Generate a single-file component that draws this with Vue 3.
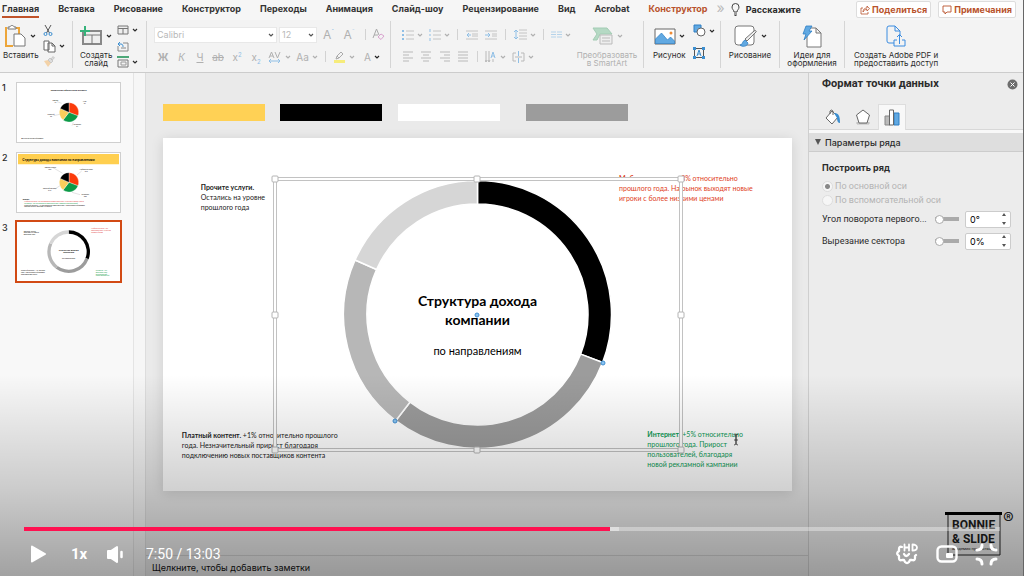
<script setup>
import { h, ref } from 'vue'

const tabs = ['Главная', 'Вставка', 'Рисование', 'Конструктор', 'Переходы', 'Анимация', 'Слайд-шоу', 'Рецензирование', 'Вид', 'Acrobat']

const Chev = () => h('svg', { class: 'chev', viewBox: '0 0 6 6', width: 6, height: 6 }, [
  h('path', { d: 'M1 2l2 2 2-2', fill: 'none', stroke: 'currentColor', 'stroke-width': 1.2 })
])

const slice = (cx, cy, R, r, from, to) => {
  const p = (a, d) => {
    const t = (a * Math.PI) / 180
    return `${(cx + d * Math.sin(t)).toFixed(2)} ${(cy - d * Math.cos(t)).toFixed(2)}`
  }
  return `M${p(from, R)}A${R} ${R} 0 0 1 ${p(to, R)}L${p(to, r)}A${r} ${r} 0 0 0 ${p(from, r)}Z`
}

const angles = [0, 111, 217.6, 294, 360]
const ringColors = ['#000', '#9c9c9c', '#b7b7b7', '#d6d6d6']
const pieColors = ['#fb3c0c', '#0c9a47', '#f9cd5c', '#000']
const build = (cx, cy, R, r, colors) =>
  colors.map((fill, i) => ({ fill, d: slice(cx, cy, R, r, angles[i], angles[i + 1]) }))

const ring = build(314.5, 176.5, 134, 110.5, ringColors)
const miniRing = build(155, 89, 64, 54, ringColors)
const miniPie = build(156, 88, 29, 1, pieColors)

const handles = [[112, 41], [314, 41], [518, 41], [112, 177], [518, 177], [112, 312], [314, 312], [518, 312]]
const points = [[314, 177], [440, 225], [232, 283]]

const axis = ref('main')
const angle = ref('0°')
const cut = ref('0%')
</script>

<template>
  <div class="app">
    <header class="tabs">
      <nav class="tablist">
        <a v-for="(t, i) in tabs" :key="t" href="#" :class="{ active: i === 0 }">{{ t }}</a>
        <a href="#" class="context">Конструктор</a>
      </nav>
      <span class="more">»</span>
      <button class="tell">
        <svg width="9" height="13" viewBox="0 0 9 13" fill="none" stroke="#444"><path d="M3 9C3 7 1 6.500 1 4a3.500 3.500 0 0 1 7 0C8 6.500 6 7 6 9zM3 11h3M3.500 12.500h2" /></svg>
        Расскажите
      </button>
      <div class="actions">
        <button>
          <svg width="10" height="10" viewBox="0 0 10 10" fill="none" stroke="#b9532d"><path d="M3 3H1v6h7V7M3 7c0-3 2-4 4-4V1l2.500 2.700L7 6V4.500C5 4.500 4 5 3 7z" stroke-width=".8" /></svg>
          Поделиться
        </button>
        <button>
          <svg width="10" height="10" viewBox="0 0 10 10" fill="none" stroke="#b9532d"><path d="M1 1h8v6H5L3 9V7H1z" stroke-width=".9" /></svg>
          Примечания
        </button>
      </div>
    </header>

    <section class="ribbon">
      <div class="group paste">
        <div class="stack">
          <button class="row">
            <svg width="22" height="24" viewBox="3 0 22 24" fill="none"><path d="M5 4H4v18h7M13 4h4v6" stroke="#eda63a" stroke-width="2" /><path d="M6 5V3h2c0-2 4-2 4 0h2v2z" fill="#fff" stroke="#777" /><path d="M12 10h7l4 4v8H12z" fill="#fff" stroke="#777" /></svg>
            <Chev />
          </button>
          <span class="cap">Вставить</span>
        </div>
        <div class="minis">
          <button aria-label="Вырезать"><svg width="10" height="11" viewBox="0 0 10 11" fill="none"><path d="M2 0l4.500 8M8 0L3.500 8" stroke="#555" /><circle cx="2.500" cy="9" r="1.500" stroke="#3b8ed0" /><circle cx="7.500" cy="9" r="1.500" stroke="#3b8ed0" /></svg></button>
          <button class="row" aria-label="Копировать"><svg width="13" height="13" viewBox="0 0 13 13" fill="#fff" stroke="#666"><path d="M1 1h5v9H1zM5 3h4l3 3v6H5zM9 3v3h3" /></svg><Chev /></button>
          <button aria-label="Формат по образцу"><svg width="12" height="11" viewBox="0 0 12 11"><path d="M1 5l4-1 3 3-3 4z" fill="#f3d2a8" /><path d="M5 4l2-2 3 3-2 2zM8 3l2-2.500 1.500 1.500L9 4z" fill="#ddd" stroke="#bbb" stroke-width=".7" /></svg></button>
        </div>
      </div>

      <div class="group newslide">
        <div class="stack">
          <button class="row">
            <svg width="23" height="20" viewBox="0 0 23 20" fill="none"><path d="M3 5h18v13H3z" fill="#eee" stroke="#888" stroke-width="2" /><path d="M3 9h18M12 9v9" stroke="#777" /><path d="M5 0v10M0 5h10" stroke="#35b27a" stroke-width="2" /></svg>
            <Chev />
          </button>
          <span class="cap">Создать<br />слайд</span>
        </div>
        <div class="minis">
          <button class="row" aria-label="Макет"><svg width="12" height="10" viewBox="0 0 12 10" fill="#eee" stroke="#777"><path d="M1 1h10v8H1zM1 3.500h10M6 3.500V9" /></svg><Chev /></button>
          <button aria-label="Сбросить"><svg width="12" height="11" viewBox="0 0 12 11" fill="none"><path d="M1 5v5h10V2H6M4 7h5" stroke="#888" /><path d="M1 3h3c2 0 2 2 2 3M3 1L1 3l2 2" stroke="#3b8ed0" /></svg></button>
          <button class="row" aria-label="Раздел"><svg width="12" height="12" viewBox="0 0 12 12" fill="none"><path d="M0 1h12" stroke="#4da878" stroke-width="2" /><path d="M1 4h10v7H1z" stroke="#777" /><path d="M4 6h5v3H4z" stroke="#999" /></svg><Chev /></button>
        </div>
      </div>

      <div class="group font dim">
        <div class="line combos">
          <label class="combo"><select aria-label="Шрифт"><option>Calibri</option></select><Chev /></label>
          <label class="combo"><select aria-label="Размер"><option>12</option></select><Chev /></label>
          <button class="big">A<sup>ˆ</sup></button>
          <button class="big">A<sup>ˇ</sup></button>
          <i class="bar"></i>
          <button aria-label="Очистить формат"><svg width="13" height="13" viewBox="0 0 13 13" fill="none"><path d="M1 10L4.500 1 7 7M2 7h4" stroke="#aaa" /><path d="M6 9l3-3 3 2-3 3.500z" stroke="#d9a3cf" /></svg></button>
        </div>
        <div class="line marks">
          <button class="b">Ж</button><button class="it">К</button><button class="u">Ч</button><button class="s">ab</button>
          <button>x<sup>2</sup></button><button>x<sub>2</sub></button>
          <button class="row" aria-label="Интервал между знаками"><svg width="14" height="12" viewBox="0 0 14 12" fill="none"><path d="M1 7l2.500-6L6 7M2 5h3M7 1l2.500 6L12 1" stroke="#b0b0b0" /><path d="M1 10h11M3 8l-2 2 2 2M10 8l2 2-2 2" stroke="#8fbfe6" /></svg><Chev /></button><button class="row">Aa<Chev /></button>
          <i class="bar"></i>
          <button class="row" aria-label="Цвет выделения"><svg width="13" height="12" viewBox="0 0 13 12"><path d="M1 9h11v3H1z" fill="#f6ec7b" /><path d="M3 8l1-3 4-4 2 2-4 4zM4 5l2 2" fill="none" stroke="#aaa" /></svg><Chev /></button>
          <button class="row tc">A<Chev /></button>
        </div>
      </div>

      <div class="group para dim">
        <div class="lists">
          <div class="line l1">
            <button class="row" aria-label="Маркеры"><svg width="12" height="12" viewBox="0 0 12 12"><path d="M4 2h8M4 6h8M4 10h8" stroke="#c4c4c4" /><path d="M0 2h2M0 6h2M0 10h2" stroke="#8fbfe6" stroke-width="2" /></svg><Chev /></button>
            <button class="row" aria-label="Нумерация"><svg width="12" height="12" viewBox="0 0 12 12"><path d="M4 2h8M4 6h8M4 10h8" stroke="#c4c4c4" /><path d="M1 0v3M1 5v2M1 9v3" stroke="#8fbfe6" /></svg><Chev /></button>
            <i class="bar"></i>
            <button aria-label="Уменьшить отступ"><svg width="12" height="10" viewBox="0 0 12 10" fill="none"><path d="M0 1h12M6 4h6M6 6h6M0 9h12" stroke="#c4c4c4" /><path d="M5 5H1M3 3L1 5l2 2" stroke="#8fbfe6" /></svg></button>
            <button aria-label="Увеличить отступ"><svg width="12" height="10" viewBox="0 0 12 10" fill="none"><path d="M0 1h12M7 4h5M7 6h5M0 9h12" stroke="#c4c4c4" /><path d="M0 5h5M3 3l2 2-2 2" stroke="#8fbfe6" /></svg></button>
            <i class="bar"></i>
            <button class="row" aria-label="Интервал"><svg width="13" height="11" viewBox="0 0 13 11" fill="none"><path d="M5 1h8M5 4h8M5 7h8M5 10h8" stroke="#c4c4c4" /><path d="M2 1v9M0 3l2-2 2 2M0 8l2 2 2-2" stroke="#8fbfe6" /></svg><Chev /></button>
            <i class="bar"></i>
            <button class="row" aria-label="Колонки"><svg width="11" height="7" viewBox="0 0 11 7"><path d="M0 1h5M0 3.500h5M0 6h5M6 1h5M6 3.500h5M6 6h5" stroke="#b5d3ea" /></svg><Chev /></button>
          </div>
          <div class="line l2">
            <button aria-label="По левому краю"><svg width="12" height="11" viewBox="0 0 12 11"><path d="M1 1h10M1 4h6M1 7h10M1 10h6" stroke="#b9b9b9" /></svg></button>
            <button aria-label="По центру"><svg width="12" height="11" viewBox="0 0 12 11"><path d="M1 1h10M3 4h6M1 7h10M3 10h6" stroke="#b9b9b9" /></svg></button>
            <button aria-label="По правому краю"><svg width="12" height="11" viewBox="0 0 12 11"><path d="M1 1h10M5 4h6M1 7h10M5 10h6" stroke="#b9b9b9" /></svg></button>
            <button aria-label="По ширине"><svg width="12" height="11" viewBox="0 0 12 11"><path d="M1 1h10M1 4h10M1 7h10M1 10h10" stroke="#b9b9b9" /></svg></button>
            <i class="bar"></i>
            <button class="row" aria-label="Направление текста"><svg width="12" height="12" viewBox="0 0 12 12" fill="none"><path d="M1 0v11M4 0v11M0 9l1 2 1-2M3 9l1 2 1-2M8 8v3" stroke="#b9b9b9" /><path d="M6 7l2-6 2 6M7 5h2" stroke="#8fbfe6" /></svg><Chev /></button>
            <button class="row" aria-label="Выравнивание"><svg width="13" height="12" viewBox="0 0 13 12" fill="none"><path d="M4 2H1v8h3M9 2h3v8H9M3 6h7" stroke="#b9b9b9" /><path d="M6.500 0v5M6.500 7v5" stroke="#8fbfe6" /></svg><Chev /></button>
          </div>
        </div>
        <div class="stack smart">
          <button class="row">
            <svg width="22" height="18" viewBox="0 0 22 18"><path d="M1 1h14l5 6H8l-3 6H1l4-6z" fill="#b5d9c4" stroke="#a3ccb4" /><path d="M8 8h12v9H8z" fill="#eee" stroke="#bbb" /><path d="M10 11h8M10 14h8" stroke="#bbb" /></svg>
            <Chev />
          </button>
          <span class="cap">Преобразовать<br />в SmartArt</span>
        </div>
      </div>

      <div class="group picture">
        <div class="stack">
          <button class="row">
            <svg width="22" height="17" viewBox="0 0 22 17"><path d="M1 1h20v15H1z" fill="#fff" stroke="#666" /><path d="M1.500 11l6-6 6 7 3-3 4 4v2.500h-19z" fill="#61a9e2" stroke="#2f7fc4" stroke-width=".7" /><circle cx="17" cy="5" r="1.500" fill="#ef8a34" /></svg>
            <Chev />
          </button>
          <span class="cap">Рисунок</span>
        </div>
        <div class="minis">
          <button class="row" aria-label="Фигуры"><svg width="13" height="13" viewBox="0 0 13 13"><path d="M1 1h7v7H1z" fill="#61a9e2" stroke="#2f7fc4" /><circle cx="8" cy="8" r="4" fill="#fff" stroke="#666" /></svg><Chev /></button>
          <button aria-label="Надпись"><svg width="12" height="12" viewBox="0 0 12 12" fill="none"><path d="M1.500 1.500h9v9h-9z" stroke="#555" /><path d="M4 9l2-6 2 6M5 7h2" stroke="#3b8ed0" /><path d="M0 0h3v3H0zM9 0h3v3H9zM0 9h3v3H0zM9 9h3v3H9z" fill="#3b8ed0" /></svg></button>
        </div>
      </div>

      <div class="group single">
        <div class="stack">
          <button class="row">
            <svg width="24" height="23" viewBox="0 0 24 23"><rect x="1" y="1" width="19" height="19" rx="3" fill="#fff" stroke="#777" /><path d="M22 7l-9 9-2-2 9-8c1-1 3 0 2 1z" fill="#eee" stroke="#555" stroke-width=".8" /><path d="M6 20c3 0 2-4 5-5l3 3c-1 4-6 4-8 2z" fill="#61a9e2" stroke="#2f7fc4" stroke-width=".8" /></svg>
            <Chev />
          </button>
          <span class="cap">Рисование</span>
        </div>
      </div>
      <div class="group single">
        <div class="stack">
          <button><svg width="20" height="23" viewBox="0 0 20 23"><path d="M5 3h9l5 5v14H5zM14 3v5h5" fill="#fff" stroke="#777" /><path d="M4 1h6L7 6h3l-8 9 2-6H1z" fill="#61a9e2" stroke="#2f7fc4" stroke-width=".8" /></svg></button>
          <span class="cap">Идеи для<br />оформления</span>
        </div>
      </div>
      <div class="group pdf">
        <div class="stack">
          <button><svg width="20" height="23" viewBox="0 0 20 23" fill="none" stroke="#3b8ce0"><path d="M8 18H3q-2 0-2-2V3q0-2 2-2h6l5 5v5M9 1v5h5M11 15H8v6h11v-6h-3M13.500 19v-9M11 12l2.500-2.500L16 12" /></svg></button>
          <span class="cap">Создать Adobe PDF и<br />предоставить доступ</span>
        </div>
      </div>
    </section>

    <main class="work">
      <aside class="thumbs">
        <div class="thumb">
          <span>1</span>
          <svg viewBox="0 0 309 177">
            <text x="155" y="23" text-anchor="middle" class="t8 bold">Количество абонентов в регионе</text>
            <path v-for="s in miniPie" :key="s.fill" :d="s.d" :fill="s.fill" stroke="#fff" />
            <path d="M120 56l14 5M110 98l18-4M165 128l4-10" class="lead" />
            <g class="t6" text-anchor="middle"><text x="115" y="53">Прочие</text><text x="115" y="59">12</text><text x="203" y="58">МТС</text><text x="203" y="64">27</text><text x="102" y="97">Платный</text><text x="102" y="103">22</text><text x="181" y="127">Интернет</text><text x="181" y="133">31</text></g>
            <text x="13" y="167" class="t6">Данные за отчетный период</text>
          </svg>
        </div>
        <div class="thumb">
          <span>2</span>
          <svg viewBox="0 0 309 177">
            <path d="M3 3h303v31H3z" fill="#ffcf4f" />
            <text x="16" y="23" class="t10 bold">Структура дохода компании по направлениям</text>
            <path v-for="s in miniPie" :key="s.fill" :d="s.d" :fill="s.fill" stroke="#fff" />
            <path d="M108 44l29 17M180 66l14-12M114 108l15-10M165 118l24 7" class="lead" />
            <g class="t6" text-anchor="middle"><text x="100" y="46">Прочие услуги</text><text x="98" y="52">19%</text><text x="208" y="52">Мобильная связь</text><text x="208" y="58">31%</text><text x="98" y="107">Платный контент</text><text x="98" y="113">21%</text><text x="205" y="126">Интернет</text><text x="205" y="132">29%</text></g>
            <g class="t6"><text x="17" y="141" class="bold">Выводы:</text><text x="22" y="148" fill="#d33">Мобильная связь -3% относительно прошлого года. На рынок выходят новые</text><text x="22" y="153" fill="#0c9a47">Интернет +5% относительно прошлого года. Прирост пользователей</text><text x="22" y="158">Платный контент +1% относительно прошлого года. Незначительный прирост</text><text x="22" y="163">Прочие услуги. Остались на уровне</text></g>
          </svg>
        </div>
        <div class="thumb current">
          <span>3</span>
          <svg viewBox="0 0 309 177">
            <path v-for="s in miniRing" :key="s.fill" :d="s.d" :fill="s.fill" />
            <g class="t8 bold" text-anchor="middle"><text x="155" y="86">Структура дохода</text><text x="155" y="94">компании</text></g>
            <g class="t6"><text x="155" y="110" text-anchor="middle">по направлениям</text>
              <text x="20" y="29">Прочите услуги.</text><text x="20" y="33">Остались на уровне</text><text x="20" y="38">прошлого года</text>
              <g fill="#d33"><text x="223" y="22">Мобильная связь. -3%</text><text x="223" y="28">прошлого года. На рынок</text><text x="223" y="34">игроки с более</text></g>
              <text x="12" y="148">Платный контент. +1% относит</text><text x="12" y="153">года. Незначительный прирост</text><text x="12" y="158">подключению новых</text>
              <g fill="#0c9a47"><text x="236" y="148">Интернет. +5%</text><text x="236" y="153">прошлого года</text><text x="236" y="158">пользователей,</text><text x="236" y="163">новой рекламной</text></g></g>
          </svg>
        </div>
      </aside>
      <div class="gutter"></div>

      <section class="stage">
        <div class="palette"><i class="yellow"></i><i class="black"></i><i class="white"></i><i class="gray"></i></div>
        <article class="slide">
          <div class="note n1"><b>Прочите услуги.</b><br />Остались на уровне<br />прошлого года</div>
          <div class="note n2"><b>Мобильная связь.</b> -3% относительно<br />прошлого года. На рынок выходят новые<br />игроки с более низкими ценами</div>
          <div class="note n3"><b>Платный контент.</b> +1% относительно прошлого<br />года. Незначительный прирост благодаря<br />подключению новых поставщиков контента</div>
          <div class="note n4"><b>Интернет.</b> +5% относительно<br />прошлого года. Прирост<br />пользователей, благодаря<br />новой рекламной кампании</div>
          <svg class="chart" viewBox="0 0 629 353">
            <path v-for="s in ring" :key="s.fill" :d="s.d" :fill="s.fill" stroke="#fff" stroke-width="1.500" />
            <rect x="112" y="41" width="406" height="271" fill="none" stroke="#c2c2c2" stroke-width="4" />
            <rect x="112" y="41" width="406" height="271" fill="none" stroke="#fff" stroke-width="2" />
            <rect v-for="(p, i) in handles" :key="i" :x="p[0] - 3" :y="p[1] - 3" width="6" height="6" rx="1" fill="#fff" stroke="#b4b4b4" />
          </svg>
          <div class="center"><h1>Структура дохода<br />компании</h1><p>по направлениям</p></div>
          <svg class="chart" viewBox="0 0 629 353">
            <circle v-for="(p, i) in points" :key="i" :cx="p[0]" :cy="p[1]" r="2" fill="#8cc4f0" stroke="#3f8fd2" />
            <path d="M571 296q2 0 2 2v7q0 2-2 2M575 296q-2 0-2 2v7q0 2 2 2M571 302h4" fill="none" stroke="#333" stroke-width=".8" />
          </svg>
        </article>
        <div class="notes">Щелкните, чтобы добавить заметки</div>
      </section>

      <aside class="panel">
        <div class="phead">
          <h2>Формат точки данных</h2>
          <button aria-label="Закрыть"><svg width="11" height="11" viewBox="0 0 11 11"><circle cx="5.500" cy="5.500" r="5" fill="#6d6d6d" /><path d="M3.500 3.500l4 4M7.500 3.500l-4 4" stroke="#fff" /></svg></button>
        </div>
        <div class="ptabs">
          <button aria-label="Заливка"><svg width="18" height="17" viewBox="0 0 18 17"><path d="M8 2l6 6-6 7-6-6z" fill="#fff" stroke="#666" /><path d="M6 5V2q1-2 3 0v4" fill="none" stroke="#666" /><path d="M10 4c4 0 6 2 6 10-2 0-3-2-3-5z" fill="#3b8ed0" /></svg></button>
          <button aria-label="Эффекты"><svg width="16" height="16" viewBox="0 0 16 16"><path d="M2 13v2h12v-2" fill="#ccc" stroke="#bbb" /><path d="M8 1l6.500 5L12 14H4L1.500 6z" fill="#fff" stroke="#666" /></svg></button>
          <button class="on" aria-label="Параметры ряда"><svg width="16" height="17" viewBox="0 0 16 17"><path d="M1 7h5v9H1z" fill="#bbb" stroke="#888" /><path d="M10 4h5v12h-5z" fill="#61a9e2" stroke="#2f7fc4" /><path d="M5.500 1h4v15h-4z" fill="#fff" stroke="#666" /></svg></button>
        </div>
        <h3><svg width="6" height="6" viewBox="0 0 6 6"><path d="M0 0h6L3 6z" fill="#555" /></svg>Параметры ряда</h3>
        <form class="form" @submit.prevent>
          <h4>Построить ряд</h4>
          <label class="radio"><input v-model="axis" type="radio" name="axis" value="main" disabled />По основной оси</label>
          <label class="radio"><input v-model="axis" type="radio" name="axis" value="aux" disabled />По вспомогательной оси</label>
          <div class="field">
            <label for="rot">Угол поворота первого...</label>
            <input type="range" value="0" aria-label="Угол поворота" />
            <span class="num"><input id="rot" v-model="angle" type="text" /><svg width="4" height="12" viewBox="0 0 4 12"><path d="M0 3l2-3 2 3zM0 9l2 3 2-3z" fill="#555" /></svg></span>
          </div>
          <div class="field">
            <label for="cut">Вырезание сектора</label>
            <input type="range" value="0" aria-label="Вырезание" />
            <span class="num"><input id="cut" v-model="cut" type="text" /><svg width="4" height="12" viewBox="0 0 4 12"><path d="M0 3l2-3 2 3zM0 9l2 3 2-3z" fill="#555" /></svg></span>
          </div>
        </form>
      </aside>
    </main>

    <div class="brand">
      <svg width="58" height="45" viewBox="0 0 58 45"><path d="M3 2v41h52V2" fill="none" stroke="#222" /><path d="M0 0h57v3H0z" fill="#000" /></svg>
      <div>BONNIE<br />&amp; SLIDE<small>академия презентаций</small></div>
      <span>®</span>
    </div>

    <div class="shade"></div>
    <div class="player">
      <input class="seek" type="range" min="0" max="783" value="470" aria-label="Позиция" />
      <div class="controls">
        <button class="play" aria-label="Воспроизвести"><svg width="17" height="18" viewBox="0 0 17 18"><path d="M2 1.500L15 9 2 16.500z" fill="#fff" stroke="#fff" stroke-width="2" stroke-linejoin="round" /></svg></button>
        <button class="speed">1x</button>
        <button class="vol" aria-label="Громкость"><svg width="18" height="19" viewBox="0 0 18 19"><path d="M2 6h3l6-4v15l-6-4H2z" fill="#fff" stroke="#fff" stroke-width="2" stroke-linejoin="round" /><path d="M15.500 7v5" stroke="#fff" stroke-width="2.500" stroke-linecap="round" /></svg></button>
        <time>7:50 / 13:03</time>
        <div class="right">
          <button aria-label="Качество HD"><svg width="23" height="22" viewBox="0 0 23 22" fill="none" stroke="#fff" stroke-width="2.300" stroke-linejoin="round" stroke-linecap="round"><path d="M6 4Q3 3 3 6v2q-3 2-1 4l1 1v2q0 3 3 2l2 0 1 2q2 2 4 0l1-2 2 0q3 1 3-2v-2l1-1" /><path d="M8 11q2 4 5 0" /><path d="M8.500 1.500v6M13 1.500v6M8.500 4.500H13M16.500 1.500v6c6 0 6-6 0-6z" stroke-width="1.800" /></svg></button>
          <button aria-label="Картинка в картинке"><svg width="22" height="18" viewBox="0 0 22 18"><rect x="1.500" y="1.500" width="19" height="15" rx="4" fill="none" stroke="#fff" stroke-width="2.400" /><rect x="10" y="8" width="7" height="5" rx="1" fill="#fff" /></svg></button>
          <button aria-label="Выйти из полного экрана"><svg width="23" height="23" viewBox="0 0 23 23" fill="none" stroke="#fff" stroke-width="3" stroke-linecap="round"><path d="M2 7q5 0 5-5M21 7q-5 0-5-5M2 16q5 0 5 5M21 16q-5 0-5 5" /></svg></button>
        </div>
      </div>
    </div>
  </div>
</template>

<style>
body { margin: 0; }
</style>

<style scoped>
.app {
  position: relative;
  display: flex;
  flex-direction: column;
  box-sizing: border-box;
  min-height: 100vh;
  overflow: hidden;
  border-right: 1px solid #666;
  background: #f4f4f4;
  color: #2b2b2b;
  font-family: Inter, "Liberation Sans", sans-serif;
  font-size: 9px;
}
button {
  margin: 0;
  padding: 0;
  border: 0;
  background: none;
  color: inherit;
  font: inherit;
}
svg { display: block; flex: none; }
h1, h2, h3, h4, p { margin: 0; }

.tabs { display: flex; height: 20px; font-size: 9px; font-weight: 700; background: #f6f6f6; }
.tablist { display: flex; gap: 19px; padding-left: 2px; }
.tablist a { color: #333; line-height: 18px; height: 16px; text-decoration: none; white-space: nowrap; }
.tablist .active { border-bottom: 2px solid #c0532a; }
.tablist .context { color: #b9532d; }
.more { margin-left: 9px; color: #bbb; font-size: 14px; font-weight: 400; line-height: 16px; }
.tell { display: flex; align-items: center; gap: 6px; margin-left: 6px; height: 18px; }
.actions { display: flex; gap: 7px; margin: 1px 7px 0 auto; }
.actions button {
  display: flex;
  align-items: center;
  gap: 2px;
  height: 17px;
  padding: 0 3px;
  border: 1px solid #ddd;
  border-radius: 2px;
  background: #fff;
  color: #b9532d;
}

.ribbon {
  display: grid;
  grid-template-columns: 73px 74px 244px 253px 77px 59px 65px 1fr;
  height: 52px;
  border-bottom: 1px solid #ccc;
  background: #f3f3f3;
}
.group { position: relative; display: flex; box-sizing: border-box; height: 47px; margin-top: 1px; border-right: 1px solid #d5d5d5; }
.group:last-child { border: 0; }
.row { display: flex; align-items: center; gap: 3px; }
.stack { display: flex; flex-direction: column; align-items: center; }
.stack button { height: 30px; display: flex; align-items: center; }
.cap { font-size: 8px; line-height: 8px; text-align: center; white-space: nowrap; }
.minis { display: flex; flex-direction: column; gap: 3px; padding-top: 3px; }
.minis button { height: 13px; display: flex; align-items: center; }
.paste { padding-left: 3px; gap: 4px; }
.newslide { padding-left: 7px; gap: 5px; }
.dim { color: #b0b0b0; }
.font { flex-direction: column; padding-left: 7px; gap: 4px; }
.line { display: grid; align-items: center; }
.combos { grid-template-columns: 123px 38px 19px 18px 10px 20px; column-gap: 2px; height: 17px; margin-top: 5px; }
.combo { display: flex; align-items: center; height: 16px; box-sizing: border-box; border: 1px solid #e8e8e8; background: #fff; padding: 0 2px; }
.combo .chev { color: #555; }
.combo select { flex: 1; min-width: 0; border: 0; appearance: none; background: none; color: #b8b8b8; font: 9px Inter, sans-serif; }
.big { font-size: 12px; }
.big { justify-self: center; }
sup, sub { font-size: 6px; color: #8fbfe6; line-height: 0; }
.marks { grid-template-columns: 18px 19px 18px 18px 20px 18px 28px 28px 8px 30px 26px; height: 19px; font-size: 10px; }
.marks button { justify-self: center; }
.b { font-weight: 700; }
.it { font-style: italic; }
.u { text-decoration: underline; }
.s { text-decoration: line-through; }
.tc .chev { color: #222; }
.bar { width: 1px; height: 11px; background: #d2d2d2; justify-self: center; }
.para { justify-content: space-between; padding: 0 5px 0 7px; }
.lists { display: flex; flex-direction: column; gap: 4px; padding-top: 5px; }
.l1 { grid-template-columns: 28px 26px 10px 19px 19px 10px 29px 9px 26px; height: 17px; }
.l2 { grid-template-columns: 19px 18px 19px 18px 10px 27px 28px; height: 19px; }
.l1 button, .l2 button { justify-self: center; }
.smart { width: 62px; }
.picture { padding-left: 9px; gap: 7px; }
.picture .minis { gap: 9px; }
.single, .pdf { justify-content: center; }
.pdf { justify-content: flex-start; padding-left: 9px; }

.work { display: flex; flex: 1; }
.thumbs { width: 133px; background: #f8f8f8; border-right: 1px solid #e4e4e4; padding-top: 9px; display: flex; flex-direction: column; gap: 9px; }
.thumb { display: flex; align-items: flex-start; padding-left: 2px; }
.thumb span { width: 14px; font-size: 9px; line-height: 11px; font-weight: 500; }
.thumb svg { width: 103px; height: 59px; border: 1px solid #cfcfcf; background: #fff; font-family: Lato, sans-serif; }
.thumb.current svg { border: 2px solid #d24a14; margin: -2px 0 0 -1px; }
.t6 { font-size: 5px; }
.t8 { font-size: 7px; }
.t10 { font-size: 10px; }
.bold { font-weight: 700; }
.lead { fill: none; stroke: #aaa; }
.gutter { width: 11px; background: #f6f6f6; border-right: 1px solid #ddd; }

.stage { flex: 1; min-width: 0; display: flex; flex-direction: column; background: #eaeaea; padding-top: 31px; }
.palette { display: flex; margin-left: 17px; height: 17px; }
.palette i { width: 102px; }
.yellow { background: #ffd155; }
.black { background: #000; margin-left: 15px; }
.white { background: #fff; margin-left: 16px; }
.gray { background: #9c9c9c; margin-left: 26px; }
.slide {
  position: relative;
  margin: 17px 16px 0 17px;
  aspect-ratio: 629 / 353;
  background: #fff;
  box-shadow: 0 2px 12px rgba(0, 0, 0, 0.12);
  font-family: Lato, Carlito, sans-serif;
  color: #222;
}
.chart { position: absolute; inset: 0; width: 100%; height: 100%; }
.note { position: absolute; font-size: 7px; line-height: 10px; white-space: nowrap; }
.n1 { left: 6%; top: 12.4%; }
.n2 { left: 72.5%; top: 10%; color: #e0401c; }
.n3 { left: 3%; top: 82.7%; }
.n4 { left: 77%; top: 82.3%; color: #0c9a55; }
.center { position: absolute; left: 30%; right: 30%; top: 43.3%; text-align: center; color: #000; }
h1 { font-size: 14px; line-height: 19px; font-weight: 700; }
.center p { font-size: 11px; line-height: 14px; margin-top: 15px; }
.notes { margin-top: auto; height: 20px; border-top: 1px solid #d0d0d0; padding-left: 6px; font-size: 9px; line-height: 23px; color: #111; }

.panel { width: 214px; border-left: 1px solid #cfcfcf; background: #ececec; }
.phead { display: flex; justify-content: space-between; align-items: center; padding: 4px 5px 0 13px; height: 14px; }
h2 { font: 700 11px/14px Roboto, sans-serif; }
.ptabs { display: flex; align-items: flex-end; padding: 12px 0 0 9px; height: 27px; border-bottom: 3px solid #f8f8f8; box-shadow: inset 0 -1px #d8d8d8; }
.ptabs button { width: 30px; height: 26px; display: grid; place-items: center; }
.ptabs .on { width: 28px; background: #f8f8f8; border: 1px solid #ddd; border-bottom: 0; box-sizing: border-box; }
h3 { display: flex; align-items: center; gap: 4px; height: 18px; padding-left: 6px; background: #dedede; border-bottom: 1px solid #ccc; font-size: 9px; font-weight: 500; }
.form { padding: 9px 12px 0 13px; font-family: Roboto, sans-serif; }
h4 { font: 700 9px/13px Inter, sans-serif; margin-bottom: 5px; }
.radio { display: flex; align-items: center; gap: 2px; height: 14px; color: #b4b4b4; }
.radio input { appearance: none; width: 11px; height: 11px; margin: 0; border: 1px solid #ddd; border-radius: 50%; background: #f6f6f6; }
.radio input:checked { background: radial-gradient(circle, #888 0 2px, #f6f6f6 3px); }
.field { display: flex; align-items: center; height: 22px; }
.radio + .field { margin-top: 1px; }
.field label { flex: 1; white-space: nowrap; }
.field input[type="range"] { appearance: none; width: 24px; height: 10px; margin: 0 6px 0 0; background: linear-gradient(#aaa, #aaa) center / 100% 4px no-repeat; }
.field input[type="range"]::-webkit-slider-thumb { appearance: none; width: 9px; height: 9px; border: 1px solid #aaa; border-radius: 50%; background: #fff; }
.num { display: flex; align-items: center; box-sizing: border-box; width: 46px; height: 17px; padding: 0 4px; border: 1px solid #ccc; border-radius: 2px; background: #fff; }
.num input { flex: 1; min-width: 0; padding: 0; border: 0; background: none; font: 9px Inter, sans-serif; }

.brand { position: absolute; right: 20px; bottom: 19px; color: #1c1c1c; font: 700 12px/14px Roboto, sans-serif; }
.brand div { position: absolute; left: 7px; top: 6px; white-space: nowrap; }
.brand small { display: block; font-size: 4px; line-height: 5px; font-weight: 400; }
.brand span { position: absolute; left: 58px; top: -2px; font: 16px/16px Inter, sans-serif; }

.shade {
  position: absolute;
  inset: 0;
  pointer-events: none;
  background: linear-gradient(rgba(0, 0, 0, 0) 65%, rgba(0, 0, 0, 0.18) 85%, rgba(0, 0, 0, 0.35) 100%);
}
.player { position: absolute; left: 24px; right: 23px; bottom: 10px; color: #fff; }
.seek {
  appearance: none;
  display: block;
  width: 100%;
  height: 4px;
  margin: 0;
  background: linear-gradient(90deg, #ff1150 60%, rgba(255, 255, 255, 0.6) 60% 61%, rgba(255, 255, 255, 0.35) 61%);
}
.seek::-webkit-slider-thumb { appearance: none; width: 0; height: 0; }
.controls { display: flex; align-items: center; height: 24px; margin-top: 11px; padding-left: 6px; font-family: Roboto, sans-serif; }
.speed { font-size: 15px; font-weight: 700; margin-left: 23px; width: 18px; }
.vol { margin-left: 18px; }
time { font-size: 14px; margin-left: 22px; }
.right { display: flex; align-items: center; gap: 17px; margin-left: auto; margin-right: 2px; }
</style>
